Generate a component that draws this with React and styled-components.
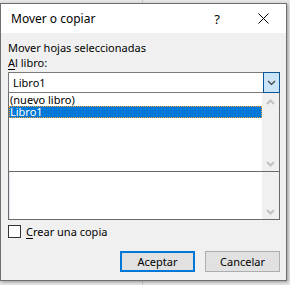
import React from "react";
import styled, { createGlobalStyle } from "styled-components";

const GlobalStyle = createGlobalStyle`
  html, body {
    margin: 0;
    padding: 0;
  }
  body {
    width: 290px;
    height: 285px;
    overflow: hidden;
    background-color: #e6e6e6;
    background-image: linear-gradient(#c8c8c8, #c8c8c8);
    background-size: 1px 285px;
    background-position: 142px 0;
    background-repeat: no-repeat;
    font-family: "Segoe UI", "Noto Sans", "Liberation Sans", sans-serif;
    font-size: 11px;
    color: #000;
  }
`;

const Screen = styled.div`
  padding-top: 3px;
`;

const Window = styled.div`
  width: 285px;
  height: 276px;
  border: 1px solid #6f6f6f;
  background: #f0f0f0;
  box-shadow: 1px 1px 3px rgba(0, 0, 0, 0.35);
  display: flex;
  flex-direction: column;
`;

const TitleBar = styled.div`
  height: 29px;
  background: #fff;
  display: flex;
  align-items: center;
  padding-left: 10px;
  font-size: 12px;
`;

const Title = styled.span`
  flex: 1;
`;

const TitleButton = styled.div`
  width: 46px;
  height: 29px;
  display: flex;
  align-items: center;
  justify-content: center;
  font-size: 13px;
`;

const Body = styled.div`
  flex: 1;
  padding: 7px 6px 0 7px;
  display: flex;
  flex-direction: column;
`;

const Label = styled.div`
  line-height: 15px;
  height: 15px;
`;

const Key = styled.span`
  text-decoration: underline;
  text-underline-offset: 2px;
`;

const Combo = styled.div`
  margin-top: 2px;
  height: 19px;
  border: 1px solid #7a7a7a;
  background: #fff;
  display: flex;
  align-items: center;
`;

const ComboText = styled.span`
  flex: 1;
  padding-left: 4px;
  line-height: 15px;
`;

const DropButton = styled.div`
  width: 15px;
  height: 19px;
  margin: -1px -1px -1px 0;
  border: 1px solid #0b5596;
  background: #cce4f7;
  display: flex;
  align-items: center;
  justify-content: center;
`;

const ListBox = styled.div`
  height: ${(p) => p.$height}px;
  border: 1px solid #6a6a6a;
  border-top: ${(p) => (p.$joined ? "none" : "1px solid #6a6a6a")};
  background: #fff;
  display: flex;
`;

const Items = styled.div`
  flex: 1;
  padding-top: 1px;
  border-left: ${(p) => (p.$tinted ? "1px solid #e3e8f2" : "none")};
`;

const Item = styled.div`
  height: 12px;
  line-height: 12px;
  padding-left: 1px;
  box-sizing: border-box;
  ${(p) =>
    p.$selected &&
    `
    background: #0078d7;
    color: #fff;
    outline: 1px dotted #ff9f2a;
    outline-offset: -1px;
  `}
`;

const ScrollBar = styled.div`
  width: 17px;
  background: #f0f0f0;
  display: flex;
  flex-direction: column;
  justify-content: ${(p) => (p.$onlyDown ? "flex-end" : "space-between")};
  align-items: center;
  padding: 6px 0 4px;
`;

const CheckRow = styled.div`
  margin-top: 5px;
  display: flex;
  align-items: center;
  gap: 5px;
  height: 13px;
  line-height: 13px;
`;

const CheckBox = styled.div`
  width: 11px;
  height: 11px;
  border: 1px solid #333;
  background: #fff;
`;

const Footer = styled.div`
  margin-top: 13px;
  display: flex;
  justify-content: flex-end;
  gap: 10px;
`;

const Button = styled.div`
  width: 75px;
  height: 21px;
  box-sizing: border-box;
  background: #e1e1e1;
  border: ${(p) => (p.$primary ? "2px solid #0078d7" : "1px solid #adadad")};
  display: flex;
  align-items: center;
  justify-content: center;
  line-height: 15px;
`;

const Chevron = ({ up, color = "#c2c2c2", w = 2 }) => (
  <svg width="9" height="6" viewBox="0 0 9 6">
    <polyline
      points={up ? "1,5 4.5,1.5 8,5" : "1,1 4.5,4.5 8,1"}
      fill="none"
      stroke={color}
      strokeWidth={w}
    />
  </svg>
);

const CloseIcon = () => (
  <svg width="11" height="11" viewBox="0 0 11 11">
    <path d="M0.5 0.5 L10.5 10.5 M10.5 0.5 L0.5 10.5" stroke="#000" strokeWidth="1" />
  </svg>
);

export default function App() {
  return (
    <Screen>
      <GlobalStyle />
      <Window>
        <TitleBar>
          <Title>Mover o copiar</Title>
          <TitleButton>?</TitleButton>
          <TitleButton>
            <CloseIcon />
          </TitleButton>
        </TitleBar>
        <Body>
          <Label>Mover hojas seleccionadas</Label>
          <Label>
            <Key>A</Key>l libro:
          </Label>
          <Combo>
            <ComboText>Libro1</ComboText>
            <DropButton>
              <Chevron color="#3c3c3c" w={1.2} />
            </DropButton>
          </Combo>
          <ListBox $height={78} $joined>
            <Items>
              <Item>(nuevo libro)</Item>
              <Item $selected>Libro1</Item>
            </Items>
            <ScrollBar>
              <Chevron up />
              <Chevron />
            </ScrollBar>
          </ListBox>
          <ListBox $height={47} $joined>
            <Items $tinted />
            <ScrollBar $onlyDown>
              <Chevron />
            </ScrollBar>
          </ListBox>
          <CheckRow>
            <CheckBox />
            <span>
              <Key>C</Key>rear una copia
            </span>
          </CheckRow>
          <Footer>
            <Button $primary>Aceptar</Button>
            <Button>Cancelar</Button>
          </Footer>
        </Body>
      </Window>
    </Screen>
  );
}
